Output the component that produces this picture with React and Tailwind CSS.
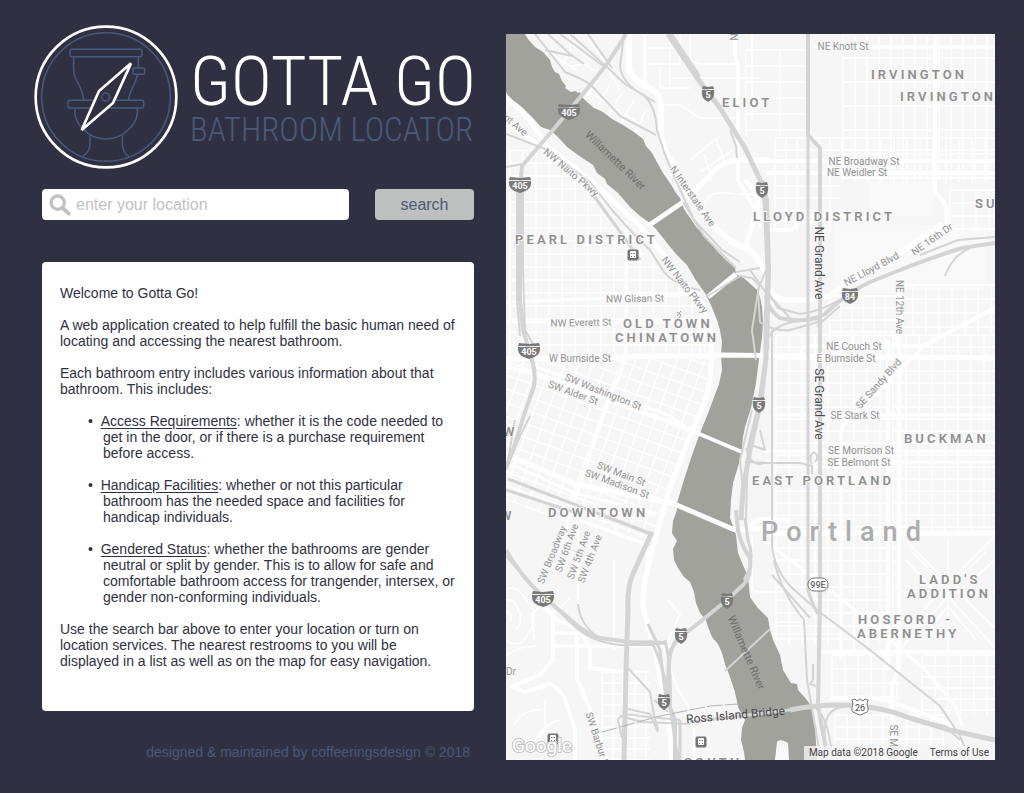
import React from "react";

const range = (from, to, step) => {
  const out = [];
  for (let v = from; v <= to; v += step) out.push(v);
  return out;
};

const gridPath = (x0, y0, x1, y1, dx, dy) =>
  range(x0, x1, dx).map((x) => `M${x} ${y0}V${y1}`).join("") +
  range(y0, y1, dy).map((y) => `M${x0} ${y}H${x1}`).join("");

const RIVER =
  "M506 34H525L528 39L535 47L543 52L550 60L552 67L555 72L559 74L562 81L566 86L565 88L571 92L575 91L578 93L580 92L582 97L587 102L594 108L603 112L612 119L623 125L634 132L643 139L646 146L652 153L658 164L663 173L670 183L676 193L680 198L684 209L688 215L697 228L707 238L716 250L722 256L727 261L735 268L736 274L745 279L757 290L760 297L762 307L763 322L762 337L758 367L756 383L751 408L745 427L743 437L741 457L733 483L731 500L730 518L736 535L738 553L748 577L750 597L757 607L768 618L770 630L773 640L780 655L783 670L791 683L797 684L798 690L806 699L812 707L815 725L817 760H745L744 752L741 740L742 728L745 720L738 707L735 692L730 677L725 664L722 653L718 644L712 637L708 627L706 620L700 613L696 603L694 592L690 582L684 577L678 568L674 560L673 549L677 541L672 533L673 521L677 510L677 503L683 483L691 458L700 433L707 416L713 400L719 384L722 370L721 355L722 342L720 330L717 320L711 305L705 293L695 279L687 265L676 254L667 243L656 229L650 223L640 216L630 207L618 193L607 184L605 179L597 173L593 165L590 163L578 155L567 147L558 137L550 130L541 127L533 118L524 109L517 103L510 99L506 92Z";

const WHITE_ROADS = [
  ["M629 34V68Q630 76 640 82L654 91Q661 96 661 108V130Q661 142 667 154L681 180Q692 200 712 224Q730 244 750 250", 6],
  ["M648 226L686 200L717 168Q728 160 740 160H770", 5],
  ["M645 34V90", 3],
  ["M735 34V54Q738 64 738 72V130V180L752 204Q760 216 760 228", 4],
  ["M506 97L528 118L548 147L590 180L640 226L664 255L686 288L703 305L711 330V360Q712 380 704 404L690 436L668 492L654 545Q640 590 644 612L655 650L668 718L672 760", 5],
  ["M506 123L545 149L596 190", 4],
  ["M506 302L612 298L700 294", 3],
  ["M506 322L708 322", 3],
  ["M506 359L620 357L720 355L995 358", 5],
  ["M708 297L736 274", 5],
  ["M506 366L560 382L630 408L690 430L742 452", 4],
  ["M534 366L668 415L690 430", 3],
  ["M506 454L575 484L655 500L672 503L735 530L770 528", 5],
  ["M509 463L572 492L656 514", 3],
  ["M626 222L626 340Q626 366 614 388L606 408L574 502L560 548", 3],
  ["M506 552L520 575", 2],
  ["M622 486L648 494L668 505", 4],
  ["M770 290Q774 300 790 300H818Q831 297 843 286L910 246L942 224", 5],
  ["M745 180Q758 192 758 205L750 233Q742 248 756 256L767 276", 5],
  ["M770 230L792 230Q800 222 804 216H880", 4],
  ["M815 47H995", 3],
  ["M745 161H995M766 173H995", 4],
  ["M935 34V190Q938 196 944 202Q948 208 946 225", 4],
  ["M899 280V556V670L892 684V760", 4],
  ["M888 340V670", 4],
  ["M802 358V350Q802 346 810 346H923L995 308", 4],
  ["M922 348L878 392L850 418Q841 426 841 434V660", 3],
  ["M772 415H995M765 451H995M765 462H995", 3],
  ["M745 530L758 520H790M765 533H995", 5],
  ["M820 652H995", 4],
  ["M764 540L848 604L925 670L955 705L962 725", 3],
  ["M830 699Q870 694 895 703L950 724L965 748", 4],
  ["M553 610V660L540 675L520 683L512 687L525 692L550 684Q562 690 566 702L575 730V760", 4],
  ["M545 608L557 620L580 630L590 648V668L624 672V710", 4],
  ["M577 636V678L596 724L607 760", 4],
  ["M552 646H672M552 633H580", 3],
  ["M579 520L640 542Q650 548 648 560", 3],
  ["M614 560V650M578 530L578 608", 2],
  ["M570 598L560 608M548 598L532 614L534 640", 2],
  ["M668 600L680 614L664 650L678 690L694 715V760", 2],
  ["M700 305V360", 2],
];

const FINE_ROADS = [
  "M506 590Q512 585 520 592L532 606Q538 620 528 634Q520 650 506 640M506 600Q514 598 518 608Q524 622 516 630M506 612Q513 612 511 622M506 655L520 648L536 646M540 710Q520 710 514 726M560 720Q544 724 532 745M545 700V730L530 752",
  "M602 76L585 64L570 66M598 80L572 120M610 84L588 124M622 92L602 128M634 100L614 136M646 110L628 148M590 92L640 124M583 104L636 138",
  "M690 34V58Q694 64 702 64H735M648 64H680V34M660 70V88H690M665 105H680L700 118H735M672 78H760M648 48H680M670 34V88M752 34V120",
  "M690 160L720 136M700 172L736 148M712 180L704 154M726 165L716 140",
  "M680 190Q700 210 707 200Q710 190 735 194M738 194H756",
  "M585 34L602 58L620 90M560 34L590 60",
  "M901 536L948 583L995 536M901 648L948 596L995 648M906 560L936 592M912 552L944 584M995 560L958 592M986 552L950 586M906 628L938 594M920 640L948 606L976 640M995 628L958 592M901 592H995M948 540V650",
  "M752 534V588Q752 592 760 592H792M770 560H800M770 625L780 622H808M770 634H842M854 650V618Q856 612 862 612",
  "M570 34V50L560 70M545 48L560 60L576 70",
];

const GREY_ROADS = [
  ["M626 34Q612 58 596 78L553 130L522 166L520 190V300L523 330L532 360Q536 372 534 386L524 415L513 450L506 468", 4],
  ["M517 190V300L520 336M523 190V270L525 330L534 346", 2],
  ["M506 550Q518 572 540 594L565 615Q585 634 600 638L630 642L666 643", 4],
  ["M506 556L530 584L548 600L572 624Q590 642 620 645H652", 2],
  ["M508 479L652 534M506 490L580 514", 3],
  ["M604 516L651 534", 3],
  ["M652 532L632 576Q627 590 628 610L626 670L624 760", 5],
  ["M628 668L650 692L654 715L658 730M654 700L668 712", 2],
  ["M668 34L680 52L700 82L720 108L745 148L762 184Q765 190 766 220L768 270L766 330V358L761 400L750 450L743 490L741 520", 5],
  ["M672 34L700 76M737 158L736 146L730 130M763 180L768 200L770 270L768 350", 2],
  ["M736 510L738 530Q741 545 750 558Q752 575 744 584L727 600L700 622L682 636Q670 644 669 662L667 700L675 720V760", 4],
  ["M745 518L748 540Q756 560 744 580M650 640Q664 660 672 720L678 760M648 624L660 650L666 700M665 640Q672 670 670 710M680 720V760", 3],
  ["M620 716L642 722L690 724M624 708L650 714L658 732M622 738L618 720Q620 712 640 716L680 720", 2],
  ["M578 604Q580 626 600 638", 2],
  ["M808 34V136", 4],
  ["M808 136V590Q812 604 818 614", 3],
  ["M809 136L820 148V600L818 706L828 760", 4],
  ["M772 330V545Q774 568 790 586L817 610L870 650L940 706L960 736L970 760", 2],
  ["M774 560Q780 590 804 620L807 680L821 760M772 575L810 618M813 664V680L810 684L816 686", 2],
  ["M790 710Q830 702 868 707Q890 710 910 718L950 730L995 740", 5],
  ["M815 707Q830 720 832 760M845 707Q822 707 825 740M920 722L945 726L960 740", 2],
  ["M995 243L962 248Q930 258 900 270L870 282Q848 292 825 314Q806 324 780 318Q768 310 766 296", 4],
  ["M995 237L958 240L920 255M945 276Q952 256 970 248M860 286Q830 310 800 314L778 308L768 292", 2],
  ["M820 319L792 322Q774 326 768 338L764 370M818 322L790 330Q775 332 760 322L758 290L766 270M840 306L817 326M750 270L764 290L790 318", 2],
  ["M506 134L548 150L590 182L612 210L630 230L650 250L664 272Q674 285 700 290", 2],
  ["M594 196L626 240L640 260", 3],
  ["M624 34L620 66Q622 84 645 96Q656 108 657 130L664 152L678 185L694 220L722 250L740 262M683 202L704 236L736 268", 2],
  ["M535 34L565 72Q580 78 590 84L620 116L656 135M560 34L606 68M570 34L608 68L625 84L655 102M588 34L612 68M548 34L570 54L584 64M545 50L572 56", 2],
  ["M506 167L522 164M506 470L520 436L530 416M515 420L508 460", 2],
  ["M706 297L740 276L752 278L760 286M736 272L760 268", 2],
  ["M752 410L740 460L744 500M760 430L765 450L748 444M745 462L772 463H800L812 466V474M746 448Q752 470 766 462", 2],
  ["M812 464Q808 456 814 452Q820 456 815 462", 2],
  ["M759 286L752 330L756 360M765 358L757 410L748 446L746 520", 2],
];

const DISTRICTS = [
  [871, 79, "IRVINGTON"], [900, 101, "IRVINGTON"], [722, 107, "ELIOT"],
  [753, 221, "LLOYD DISTRICT"], [975, 208, "SUNDERLAND"], [515, 244, "PEARL DISTRICT"],
  [623, 328, "OLD TOWN"], [615, 342, "CHINATOWN"], [904, 443, "BUCKMAN"],
  [752, 485, "EAST PORTLAND"], [548, 517, "DOWNTOWN"], [919, 584, "LADD'S"],
  [907, 598, "ADDITION"], [858, 624, "HOSFORD -"], [857, 638, "ABERNETHY"],
  [684, 767, "SOUTH"], [503, 436, "W"], [500, 520, "W"],
];

const STREETS = [
  [843, 50, 0, "NE Knott St"], [864, 165, 0, "NE Broadway St"], [857, 176, 0, "NE Weidler St"],
  [635, 302, -1, "NW Glisan St"], [581, 326, -1, "NW Everett St"], [580, 362, 0, "W Burnside St"],
  [854, 350, 0, "NE Couch St"], [846, 362, 0, "E Burnside St"], [855, 419, 0, "SE Stark St"],
  [861, 454, 0, "SE Morrison St"], [859, 466, 0, "SE Belmont St"],
  [602, 395, 22, "SW Washington St"], [572, 396, 20, "SW Alder St"],
  [620, 477, 21, "SW Main St"], [616, 487, 20, "SW Madison St"],
  [569, 175, 40, "NW Naito Pkwy"], [682, 287, 52, "NW Naito Pkwy"],
  [690, 198, 55, "N Interstate Ave"], [508, 123, 40, "Front Ave"],
  [873, 272, -28, "NE Lloyd Blvd"], [934, 242, -35, "NE 16th Dr"],
  [896, 307, 90, "NE 12th Ave"], [881, 386, -48, "SE Sandy Blvd"],
  [555, 556, -68, "SW Broadway"], [570, 549, -70, "SW 6th Ave"],
  [582, 556, -70, "SW 5th Ave"], [593, 560, -69, "SW 4th Ave"],
  [596, 746, 72, "SW Barbur Blvd"], [511, 675, 0, "Dr"],
  [890, 754, 90, "SE Milwaukie"], [738, 34, -90, "NE"],
];

const SHIELDS = [
  [569, 111, "405"], [520, 184, "405"], [529, 350, "405"], [543, 598, "405"],
  [708, 93, "5"], [762, 189, "5"], [759, 404, "5"], [727, 600, "5"],
  [681, 635, "5"], [664, 701, "5"], [850, 295, "84"],
];

function Shield({ x, y, label }) {
  const w = label.length === 3 ? 11 : label.length === 2 ? 8 : 6;
  return (
    <g fill="#7a7a7a">
      <path d={`M${x - w + 1} ${y - 7}L${x} ${y - 6}L${x + w - 1} ${y - 7}L${x + w} ${y - 4}H${x - w}Z`} />
      <path
        d={`M${x - w} ${y - 3}H${x + w}Q${x + w + 1} ${y + 4} ${x + w / 2} ${y + 7}L${x} ${y + 9}L${x - w / 2} ${y + 7}Q${x - w - 1} ${y + 4} ${x - w} ${y - 3}Z`}
      />
      <text x={x} y={y + 5} textAnchor="middle" className="fill-white text-[9px] font-bold">
        {label}
      </text>
    </g>
  );
}

function Station({ x, y }) {
  return (
    <g>
      <rect x={x - 5} y={y - 5} width="10" height="10" rx="1" fill="#757575" stroke="#757575" />
      <rect x={x - 3} y={y - 4} width="6" height="7" rx="1" fill="#fff" />
      <path d={`M${x - 2} ${y - 1.5}H${x - 0.5}M${x + 0.5} ${y - 1.5}H${x + 2}M${x - 2} ${y + 1.5}H${x - 1}M${x + 1} ${y + 1.5}H${x + 2}M${x - 3} ${y + 4.5}L${x - 2} ${y + 3}M${x + 3} ${y + 4.5}L${x + 2} ${y + 3}`} stroke="#757575" />
    </g>
  );
}

function PortlandMap() {
  return (
    <svg
      viewBox="506 34 489 726"
      preserveAspectRatio="xMidYMid slice"
      role="img"
      aria-label="Map of Portland"
      className="absolute inset-0 h-full w-full font-[Roboto,sans-serif]"
    >
      <defs>
        <clipPath id="nw"><path d="M506 150H545L610 215L660 270L700 300L712 357H506Z" /></clipPath>
        <clipPath id="sw"><path d="M506 359H712L700 410L655 540L560 520L506 500Z" /></clipPath>
      </defs>
      <path d="M506 34H995V760H506Z" fill="#f6f6f6" />
      <path d="M870 182H935V216H870ZM835 225H985V290H835Z" fill="#f9f9f9" />

      <g fill="none" stroke="#fff" strokeWidth="1.3">
        <path clipPath="url(#nw)" d={gridPath(510, 150, 715, 358, 13, 13)} />
        <g clipPath="url(#sw)">
          <path transform="rotate(20 600 440)" d={gridPath(450, 320, 760, 600, 13, 13)} />
        </g>
        <path d={gridPath(602, 672, 650, 760, 11, 11)} />
        <path d={gridPath(843, 34, 995, 180, 12, 24)} />
        <path d={gridPath(746, 50, 808, 136, 34, 16)} />
        <path d={gridPath(775, 138, 840, 232, 11, 12)} />
        <path d={gridPath(842, 138, 995, 182, 13, 12)} />
        <path d={gridPath(950, 190, 995, 232, 13, 13)} />
        <path d={gridPath(776, 335, 995, 535, 13, 12)} />
        <path d={gridPath(776, 535, 900, 645, 13, 13)} />
        <path d={gridPath(922, 655, 995, 715, 13, 11)} />
        <path d={gridPath(832, 655, 900, 700, 13, 14)} />
        <path d={gridPath(835, 715, 945, 760, 12, 12)} />
        <path d={gridPath(900, 285, 995, 335, 13, 14)} />
        <path d={gridPath(830, 296, 898, 345, 11, 12)} />
      </g>
      <g fill="none" stroke="#fff" strokeWidth="1.5">
        {FINE_ROADS.map((d) => <path key={d} d={d} />)}
      </g>

      <path d={RIVER} fill="#a1a29c" />
      <path d="M775 760L777 742Q780 738 788 743L789 760Z" fill="#f9f9f9" />

      <g fill="none" stroke="#fff" strokeLinejoin="round">
        {WHITE_ROADS.map(([d, w]) => <path key={d} d={d} strokeWidth={w} />)}
      </g>
      <g fill="none" stroke="#d4d4d4" strokeLinejoin="round">
        {GREY_ROADS.map(([d, w]) => <path key={d} d={d} strokeWidth={w} />)}
        <path d="M725 671L770 629" strokeWidth="2" />
        <path d="M690 722L790 710" strokeWidth="3" />
      </g>
      <path d="M602 732L660 716L710 706L738 704" fill="none" stroke="#b5b5b5" strokeDasharray="16 2" />

      <g fill="#949494" stroke="#f8f8f8" strokeWidth="2" strokeLinejoin="round" className="text-[10px]" style={{ paintOrder: "stroke" }}>
        {STREETS.map(([x, y, r, t]) => (
          <text key={t + x} transform={`translate(${x} ${y}) rotate(${r})`} textAnchor="middle">{t}</text>
        ))}
      </g>
      <g fill="#8f8f8f" stroke="#f8f8f8" strokeWidth="2" strokeLinejoin="round" className="text-[13px] font-semibold tracking-[0.24em]" style={{ paintOrder: "stroke" }}>
        {DISTRICTS.map(([x, y, t]) => <text key={t + x} x={x} y={y}>{t}</text>)}
      </g>
      <text x="761" y="541" fill="#adadad" stroke="#f8f8f8" strokeWidth="2" className="text-[27px] font-medium tracking-[0.3em]" style={{ paintOrder: "stroke" }}>Portland</text>

      <g fill="#6e6e6a" className="text-[11px]">
        <text transform="translate(613 163) rotate(44)" textAnchor="middle">Willamette River</text>
        <text transform="translate(743 654) rotate(67)" textAnchor="middle">Willamette River</text>
      </g>
      <g fill="#4a4a4a" stroke="#f8f8f8" strokeWidth="1" className="text-xs" style={{ paintOrder: "stroke" }}>
        <text transform="translate(815 263) rotate(90)" textAnchor="middle">NE Grand Ave</text>
        <text transform="translate(815 404) rotate(90)" textAnchor="middle">SE Grand Ave</text>
      </g>
      <text fill="#4a4a4a" className="text-xs" transform="translate(736 719) rotate(-5)" textAnchor="middle">Ross Island Bridge</text>

      {SHIELDS.map(([x, y, t]) => <Shield key={`${x}-${y}`} x={x} y={y} label={t} />)}
      <g fill="#fff" stroke="#757575">
        <rect x="808" y="578" width="20" height="13" rx="6" />
        <path d="M852 700L855 699L857 701L860 699L863 701L865 699L868 700L867 704Q870 712 865 713L860 715L855 713Q850 712 853 704Z" />
      </g>
      <g fill="#666" textAnchor="middle" className="text-[9px] font-medium">
        <text x="818" y="588">99E</text>
        <text x="860" y="711">26</text>
      </g>
      <Station x={633} y={255} />
      <Station x={701} y={742} />
      <Station x={553} y={739} />
      <path d="M677 312L681 315L679 318M677 316L681 311" stroke="#a0a09a" fill="none" />
      <text x="512" y="752" fill="#fff" stroke="#c4c4c4" strokeWidth="2" className="text-[19px] font-normal" style={{ paintOrder: "stroke" }}>Google</text>
    </svg>
  );
}

function Emblem() {
  return (
    <svg viewBox="31 27 432 432" className="size-36 shrink-0" fill="none" aria-hidden="true">
      <circle cx="247" cy="243" r="211" stroke="#fff" strokeWidth="8" />
      <g stroke="#4a5a78" strokeWidth="4.5" strokeLinejoin="round">
        <circle cx="247" cy="243" r="193" />
        <rect x="139" y="100" width="216" height="22" rx="5" />
        <path d="M150 122V160Q150 178 158 192Q176 222 180 252M344 122V156M342 175Q338 192 328 212Q317 234 314 252" />
        <rect x="328" y="156" width="35" height="19" rx="5" />
        <rect x="133" y="253" width="227" height="23" rx="5" />
        <path d="M154 276V294Q158 322 180 340Q205 369 247 369Q289 369 315 340Q338 320 341 292V276" />
        <path d="M199 358V385Q198 410 178 420M296 358V385Q297 410 316 422" />
      </g>
      <path d="M322 142L226 225L174 342L268 261Z" stroke="#fff" strokeWidth="8" fill="#2f3142" />
      <circle cx="246" cy="243" r="12" stroke="#4a5a78" strokeWidth="4.5" />
    </svg>
  );
}

export default function App() {
  return (
    <div className="min-h-screen bg-[#2f3142] pt-[25px] pr-[29px] pb-[33px] pl-[34px] font-['Liberation_Sans',Arial,sans-serif]">
      <div className="grid grid-cols-[440fr_489fr] gap-8">
        <div className="flex min-w-0 flex-col">
          <header className="flex items-center gap-3">
            <Emblem />
            <h1 className="font-['Roboto_Condensed',Roboto,sans-serif] font-light whitespace-nowrap">
              <span className="block text-[69px] leading-[66px] text-white">GOTTA GO</span>
              <span className="block text-[33px] leading-[30px] text-[#4a5a78]">BATHROOM LOCATOR</span>
            </h1>
          </header>

          <main className="pl-2">
            <form className="mt-5 flex gap-[26px]" onSubmit={(e) => e.preventDefault()}>
              <label className="flex h-[31px] min-w-0 flex-1 items-center gap-[5px] rounded bg-white pl-[7px]">
                <svg viewBox="0 0 66 66" className="size-[22px] shrink-0" fill="none" stroke="#c2c2c2" aria-hidden="true">
                  <circle cx="26" cy="26" r="20" strokeWidth="10" />
                  <path d="M40 41L59 59" strokeWidth="12" strokeLinecap="round" />
                </svg>
                <input
                  type="text"
                  aria-label="Location"
                  placeholder="enter your location"
                  className="h-full min-w-0 flex-1 bg-transparent text-base text-[#2f3142] outline-none placeholder:text-[#c2c2c2]"
                />
              </label>
              <button type="submit" className="h-[31px] w-[99px] rounded bg-[#bec0bf] text-base text-[#4a5a78]">
                search
              </button>
            </form>

            <section className="mt-[42px] flex flex-col gap-4 rounded bg-white pt-[23px] pr-4 pb-[42px] pl-[18px] text-sm leading-4 text-[#2f3142]">
              <p>Welcome to Gotta Go!</p>
              <p>A web application created to help fulfill the basic human need of locating and accessing the nearest bathroom.</p>
              <p>Each bathroom entry includes various information about that bathroom. This includes:</p>
              <ul className="flex flex-col gap-4 pl-[43px] -indent-[15px]">
                <li>•&nbsp;&nbsp;<u className="underline-offset-2">Access Requirements</u>: whether it is the code needed to get in the door, or if there is a purchase requirement before access.</li>
                <li>•&nbsp;&nbsp;<u className="underline-offset-2">Handicap Facilities</u>: whether or not this particular bathroom has the needed space and facilities for handicap individuals.</li>
                <li>•&nbsp;&nbsp;<u className="underline-offset-2">Gendered Status</u>: whether the bathrooms are gender neutral or split by gender. This is to allow for safe and comfortable bathroom access for trangender, intersex, or gender non-conforming individuals.</li>
              </ul>
              <p>Use the search bar above to enter your location or turn on location services. The nearest restrooms to you will be displayed in a list as well as on the map for easy navigation.</p>
            </section>
          </main>

          <footer className="mt-[33px] pr-1 text-right text-sm leading-4 text-[#4a5a78]">
            designed &amp; maintained by coffeeringsdesign © 2018
          </footer>
        </div>

        <aside className="relative mt-[9px] overflow-hidden">
          <PortlandMap />
          <div className="absolute right-0 bottom-0 flex gap-3 bg-[#f5f5f5]/80 pr-[6px] pl-[5px] font-[Roboto,sans-serif] text-[10px] leading-[14px] text-[#444]">
            <span>Map data ©2018 Google</span>
            <a href="#terms">Terms of Use</a>
          </div>
        </aside>
      </div>
    </div>
  );
}
